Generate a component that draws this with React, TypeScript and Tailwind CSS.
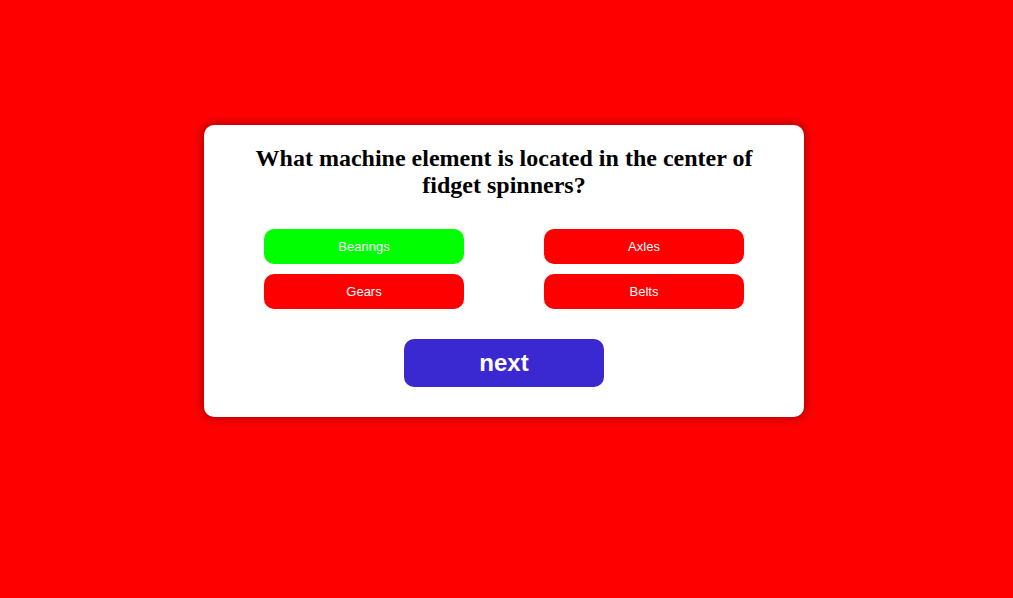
const answers = [
  { text: "Bearings", correct: true },
  { text: "Axles", correct: false },
  { text: "Gears", correct: false },
  { text: "Belts", correct: false },
];

export default function App() {
  return (
    <div className="flex min-h-screen flex-col items-center bg-[#ff0000] pt-[125px] pr-[5px]">
      <main className="flex w-full max-w-[600px] flex-col items-center rounded-[10px] bg-white px-[50px] pt-5 pb-[30px] shadow-[0_0_10px_2px_rgba(0,0,0,0.3)]">
        <h1 className="text-center font-['Liberation_Serif',serif] text-[24px] leading-[27px] font-bold text-black">
          What machine element is located in the center of fidget spinners?
        </h1>
        <div className="my-[30px] grid w-full grid-cols-2 gap-y-[10px] px-[10px]">
          {answers.map((answer) => (
            <button
              key={answer.text}
              type="button"
              className={`h-[35px] w-[200px] rounded-[10px] font-['Liberation_Sans',sans-serif] text-[13px] text-white even:justify-self-end ${
                answer.correct ? "bg-[#00ff00]" : "bg-[#ff0000]"
              }`}
            >
              {answer.text}
            </button>
          ))}
        </div>
        <button
          type="button"
          className="h-12 w-[200px] rounded-[10px] bg-[#3a28d1] font-['Liberation_Sans',sans-serif] text-[24px] font-bold text-white"
        >
          next
        </button>
      </main>
    </div>
  );
}
